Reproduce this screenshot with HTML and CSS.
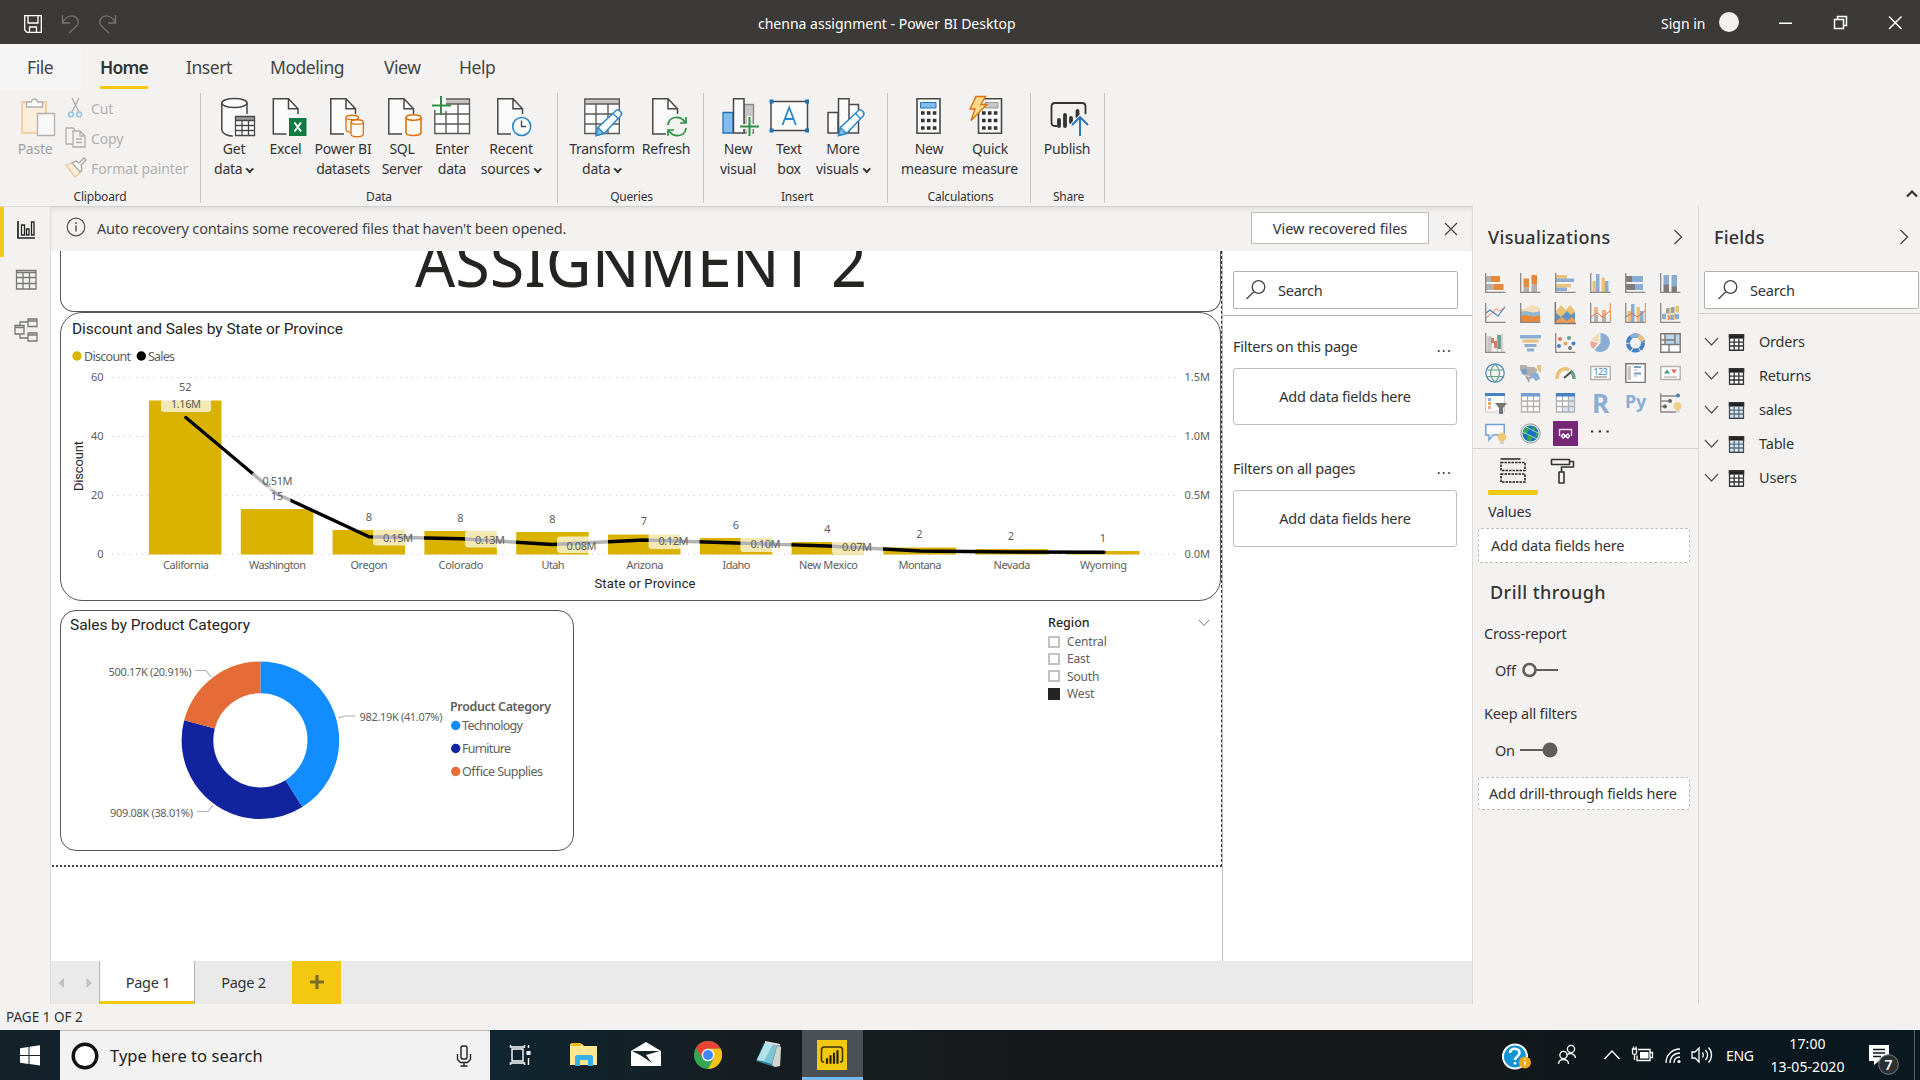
FILE: index.html
```html
<!DOCTYPE html>
<html lang="en">
<head>
<meta charset="utf-8">
<title>chenna assignment - Power BI Desktop</title>
<link rel="stylesheet" href="styles.css">
</head>
<body>
<svg width="0" height="0" class="defs">
  <defs>
    <g id="doc"><path d="M.8 .8H16l9 9.5V36H.8z" fill="#fafafa" stroke="none"/><path d="M14 36H.8V.8H16l9.500 10V16M16 .8v10h9.500" fill="none" stroke="#494847" stroke-width="1.500"/></g>
    <g id="cyl"><path d="M0 3v15c0 4 15 4 15 0V3" fill="#fdfaf5" stroke="#d8730f" stroke-width="1.600"/><ellipse cx="7.500" cy="3" rx="7.500" ry="2.700" fill="#fff" stroke="#d8730f" stroke-width="1.600"/></g>
    <g id="pencil"><path d="M0 26l2-8L20 1c2-2 7 2 5 5L8 24z" fill="#fff" stroke="#2b88c8" stroke-width="1.500"/><path d="M0 26l2-8 6 6zM17 4l5 5" fill="#83bdec" stroke="#2b88c8" stroke-width="1.300"/></g>
    <g id="tbl"><path d="M1 1h18v20H1z" fill="#fff"/><path d="M0 0h20v6H0z" fill="#222"/><path d="M1 1h18v20H1zM1 10.500h18M1 15.500h18M7 6v15M13 6v15" fill="none" stroke="#333" stroke-width="1.700"/></g>
    <g id="axes"><path d="M.7 0v19.300H20.500" fill="none" stroke="#8a8886" stroke-width="1.300"/></g>
  </defs>
</svg>

<header class="titlebar">
  <svg class="qat" width="130" height="44" fill="none" stroke="#fff" stroke-width="1.300">
    <path d="M24.700 15.700h16.600v16.600H27l-2.300-2.300zM28 16v7h10v-7M29.500 32v-5h7v5"/>
    <path d="M62.500 15v8h7.500M63 22c3-6 10-8 13.500-4 2.500 3 2 6 0 8l-7.500 7" stroke="#767472"/>
    <path d="M115.500 15v8H108M115 22c-3-6-10-8-13.500-4-2.500 3-2 6 0 8l7.500 7" stroke="#767472"/>
  </svg>
  <div class="win-title">chenna assignment - Power BI Desktop</div>
  <div class="signin">Sign in</div>
  <i class="avatar"></i>
  <svg width="150" height="44" fill="none" stroke="#fff" stroke-width="1.500"><path d="M9 23.200h13M64.500 19.500h9v9h-9zM67.500 19v-2.500h9v9H74M119 16.500l12.500 12.500M131.500 16.500L119 29"/></svg>
</header>

<nav class="tabs">
  <span class="tab file">File</span><span class="tab on">Home</span><span class="tab insert">Insert</span><span class="tab modeling">Modeling</span><span class="tab view">View</span><span class="tab help">Help</span>
</nav>

<section class="ribbon">
  <div class="group clipboard">
    <div class="btns">
      <div class="btn paste"><svg viewBox="11 95 48 45"><path d="M22 102h24v31H22z" fill="#fbeedd" stroke="#f0cfa4" stroke-width="2"/><path d="M26.500 107v-5h5c0-4 6-4 6 0h5v5z" fill="#fafafa" stroke="#b3b0ad" stroke-width="1.300"/><path d="M37.500 113.500h17v22h-17z" fill="#f8f8f8" stroke="#b3b0ad" stroke-width="1.300"/></svg>Paste</div>
      <div class="clip-list">
        <div class="clip-item"><svg viewBox="0 0 22 22"><path d="M7 1l7 14M14 1L7 15" fill="none" stroke="#b0aeac" stroke-width="1.400"/><circle cx="6" cy="17.500" r="2.400" fill="none" stroke="#9fc6e2" stroke-width="1.700"/><circle cx="14" cy="17.500" r="2.400" fill="none" stroke="#9fc6e2" stroke-width="1.700"/></svg>Cut</div>
        <div class="clip-item"><svg viewBox="0 0 22 22" fill="none" stroke="#b0aeac" stroke-width="1.300"><path d="M7 17H1V1h7l2 2M8 4h7l5 5v11H8zM15 4v5h5M11 12h6M11 15.500h6"/></svg>Copy</div>
        <div class="clip-item"><svg viewBox="0 0 22 22"><path d="M1 8l9-3 7 9-7 6z" fill="#fbeedd" stroke="#efc596" stroke-width="1.300"/><path d="M7 6l4-2 3 2 5-5 2 2-5 5 1 4-2 3z" fill="#f6f5f4" stroke="#aaa8a6" stroke-width="1.300"/></svg>Format painter</div>
      </div>
    </div>
    <div class="glabel">Clipboard</div>
  </div>
  <div class="group data">
    <div class="btns">
      <div class="btn w54"><svg viewBox="211 95 48 45"><path d="M222.800 103v27c1 4 6 6 12 6h13V103" fill="#fafafa"/><path d="M222.800 103v27c1 4 6 6 11 6M248 103v11" fill="none" stroke="#494847" stroke-width="1.500"/><ellipse cx="235.400" cy="103" rx="12.600" ry="4.500" fill="#fafafa" stroke="#494847" stroke-width="1.500"/><path d="M236.500 116.500h19v19h-19z" fill="#fff"/><path d="M236.500 116.500h19v3.500h-19z" fill="#999"/><path d="M236.500 116.500h19v19h-19zM236.500 120.500h19M236.500 125.500h19M236.500 130.500h19M243 120v15.500M249.500 120v15.500" fill="none" stroke="#494847" stroke-width="1.300"/></svg>Get<br>data<i class="caret"></i></div>
      <div class="btn w47"><svg viewBox="261.500 95 48 45"><use href="#doc" x="272" y="98"/><path d="M288.500 118h17.500v18h-17.500z" fill="#107c41"/><path d="M294 122.500l6.500 9M300.500 122.500l-6.500 9" stroke="#fff" stroke-width="2"/></svg>Excel</div>
      <div class="btn w68"><svg viewBox="319 95 48 45"><use href="#doc" x="330" y="98"/><g transform="translate(346 115) scale(.82)"><use href="#cyl"/></g><g transform="translate(351 119.500) scale(.82)"><use href="#cyl"/></g></svg>Power BI<br>datasets</div>
      <div class="btn w50"><svg viewBox="378 95 48 45"><use href="#doc" x="388" y="98"/><use href="#cyl" x="406" y="114.500"/></svg>SQL<br>Server</div>
      <div class="btn w50"><svg viewBox="428 95 48 45"><path d="M434.800 99h34.500v34.500h-34.500z" fill="#fff"/><path d="M446 99h24v5h-24z" fill="#c8c6c4"/><path d="M446 99h23.500v34.500h-34.700V110M446 104h23M435 114h34M435 124h34M446 111v23M458 104v30" fill="none" stroke="#5c5a58" stroke-width="1.400"/><path d="M441 96v19M432 105.500h19" stroke="#2f8f46" stroke-width="2"/></svg>Enter<br>data</div>
      <div class="btn w70"><svg viewBox="488 95 48 45"><use href="#doc" x="498" y="98"/><circle cx="522.700" cy="126.500" r="9" fill="#fff" stroke="#2b88c8" stroke-width="1.600"/><path d="M522.500 120.500v6h4.500" fill="none" stroke="#494847" stroke-width="1.400"/></svg>Recent<br>sources<i class="caret"></i></div>
    </div>
    <div class="glabel">Data</div>
  </div>
  <div class="group queries">
    <div class="btns">
      <div class="btn w72"><svg viewBox="579 95 48 45"><path d="M585.800 99h34.500v34.500h-34.500z" fill="#fff"/><path d="M586 99h34v5h-34z" fill="#c8c6c4"/><path d="M585.800 99h34.500v34.500h-34.500zM586 104h34M586 114h34M586 124h34M597 104v30M609 104v30" fill="none" stroke="#5c5a58" stroke-width="1.400"/><use href="#pencil" x="597" y="109.500"/></svg>Transform<br>data<i class="caret"></i></div>
      <div class="btn w54"><svg viewBox="642 95 48 45"><use href="#doc" x="652" y="98"/><path d="M666 117h22v20h-22z" fill="#f3f2f1"/><path d="M668 125c1-9 12-10 17-3M686 117v6h-6M686 128c-1 9-12 10-17 3M668 136v-6h6" fill="none" stroke="#2f8f46" stroke-width="1.700"/></svg>Refresh</div>
    </div>
    <div class="glabel">Queries</div>
  </div>
  <div class="group insert-g">
    <div class="btns">
      <div class="btn w48"><svg viewBox="714 95 48 45"><path d="M723 112.500h10v20.500h-10z" fill="#83bdec" stroke="#2272b9" stroke-width="1.300"/><path d="M744 104.500h9.500v28.500H744z" fill="#c8c6c4" stroke="#8a8886" stroke-width="1.300"/><path d="M733.500 98.800h10.500v34.200h-10.500z" fill="#fafafa" stroke="#494847" stroke-width="1.500"/><path d="M749.500 116v21M740 126.500h19" stroke="#f3f2f1" stroke-width="5"/><path d="M749.500 117v19M740 126.500h19" stroke="#2f8f46" stroke-width="2"/></svg>New<br>visual</div>
      <div class="btn w54"><svg viewBox="765 95 48 45"><path d="M771 101.500h36.500v29H771z" fill="#fafafa" stroke="#494847" stroke-width="1.500"/><path d="M769.500 99.500h4v4h-4zM805 99.500h4v4h-4zM769.500 128.500h4v4h-4zM805 128.500h4v4h-4z" fill="#2272b9"/><path d="M782.500 125l6.700-17.500 6.700 17.500M785 119h8.500" fill="none" stroke="#2b88c8" stroke-width="1.800"/></svg>Text<br>box</div>
      <div class="btn w56"><svg viewBox="820 95 48 45"><path d="M829 112.500h10v20.500h-10zM850 104.500h9.500v28.500H850zM839.500 98.800h10.500v34.200h-10.500z" fill="#fafafa" stroke="#494847" stroke-width="1.500"/><use href="#pencil" x="839.500" y="109.500"/></svg>More<br>visuals<i class="caret"></i></div>
    </div>
    <div class="glabel">Insert</div>
  </div>
  <div class="group calc">
    <div class="btns">
      <div class="btn w62"><svg viewBox="905 95 48 45"><path d="M917 98.800h23v34.500h-23z" fill="#fafafa" stroke="#494847" stroke-width="1.600"/><path d="M920.500 102.500h15.500v5.500h-15.500z" fill="#83bdec" stroke="#2272b9"/><path d="M921 113h15.500M921 120.500h15.500M921 128h15.500" stroke="#333" stroke-width="3.600" stroke-dasharray="3.600 2.300"/></svg>New<br>measure</div>
      <div class="btn w60"><svg viewBox="966 95 48 45"><path d="M978.500 98.800h23v34.500h-23z" fill="#fafafa" stroke="#494847" stroke-width="1.600"/><path d="M985 102.500h13v5.500h-13z" fill="#c8c6c4" stroke="#999"/><path d="M982 113h15.500M982 120.500h15.500M982 128h15.500" stroke="#333" stroke-width="3.600" stroke-dasharray="3.600 2.300"/><path d="M976 96.500h9.500l-4.500 8h6L971 120.500l4-11.500h-5z" fill="#ffd98a" stroke="#d8730f" stroke-width="1.400"/></svg>Quick<br>measure</div>
    </div>
    <div class="glabel">Calculations</div>
  </div>
  <div class="group share">
    <div class="btns">
      <div class="btn w54"><svg viewBox="1043 95 48 45"><path d="M1057 126h-2c-2.500 0-3.500-1-3.500-3.500v-16c0-2.500 1-3.500 3.500-3.500h27c2.500 0 3.500 1 3.500 3.500V114" fill="none" stroke="#333" stroke-width="1.800"/><path d="M1059 120v6M1065 115v11M1071 118v4M1077.500 111v6" stroke="#333" stroke-width="3.800" stroke-linecap="round"/><path d="M1080 136v-19M1072 125l8-8 8 8" fill="none" stroke="#f3f2f1" stroke-width="4"/><path d="M1080 136v-19M1072 125l8-8 8 8" fill="none" stroke="#2272b9" stroke-width="1.900"/></svg>Publish</div>
    </div>
    <div class="glabel">Share</div>
  </div>
  <svg class="collapse" width="14" height="9"><path d="M1 7.500l5-5 5 5" fill="none" stroke="#333" stroke-width="2.200"/></svg>
</section>

<main class="main">
  <aside class="rail">
    <div class="rail-item on"><svg viewBox="0 0 24 24" fill="none" stroke="#222" stroke-width="1.700"><path d="M4 3v17h17"/><path d="M7.500 7h3v10h-3zM12.500 11h2.500v6h-2.500zM17.500 4h2.500v13h-2.500z" stroke-width="1.300"/></svg></div>
    <div class="rail-item"><svg viewBox="0 0 24 24" fill="none" stroke="#777" stroke-width="1.300"><path d="M2.500 2.500h19.500v18.500h-19.500zM2.500 4.500h19.500M2.500 9.500h19.500M2.500 15.500h19.500M9 4v17M15.500 4v17"/></svg></div>
    <div class="rail-item"><svg viewBox="0 0 24 24" fill="none" stroke="#777" stroke-width="1.300"><path d="M1 7.500h9v8.500H1zM1 9.500h9M14 1h9v7.500h-9zM14 3h9M14 15h9v8h-9zM14 17h9M6 7V4h8M6 16v4h8"/></svg></div>
  </aside>

  <section class="report">
    <div class="recovery">
      <svg width="20" height="20" fill="none" stroke="#555" stroke-width="1.200"><circle cx="10" cy="10" r="8.800"/><path d="M10 8.500v6M10 5.300v1.600" stroke-width="1.500"/></svg>
      <span class="rec-text">Auto recovery contains some recovered files that haven't been opened.</span>
      <span class="rec-btn">View recovered files</span>
      <svg class="rec-x" width="14" height="14"><path d="M1 1l12 12M13 1L1 13" stroke="#444" stroke-width="1.200"/></svg>
    </div>
    <div class="work">
      <div class="canvas">
        <div class="card heading"><svg viewBox="61 251 1160 60"><text x="415" y="286.500" font-size="65" textLength="452" lengthAdjust="spacingAndGlyphs" fill="#252423">ASSIGNMENT 2</text></svg></div>
        <div class="card combo">
          <svg viewBox="61 313 1160 287" class="viz">
            <text class="vt" x="72" y="334" textLength="271">Discount and Sales by State or Province</text>
            <circle cx="77" cy="356" r="4.700" fill="#d9b300"/><text class="lg" x="84" y="361" textLength="47">Discount</text>
            <circle cx="141.300" cy="356" r="4.700"/><text class="lg" x="148" y="361" textLength="27">Sales</text>
            <path d="M112 377.500H1178M112 436.500H1178M112 495.500H1178M112 554.500H1178" stroke="#c9c8c6" stroke-dasharray="1 5"/>
            <g class="ax end"><text x="103.500" y="381">60</text><text x="103.500" y="440">40</text><text x="103.500" y="499">20</text><text x="103.500" y="558">0</text><text x="1210" y="381">1.5M</text><text x="1210" y="440">1.0M</text><text x="1210" y="499">0.5M</text><text x="1210" y="558">0.0M</text></g>
            <path fill="#d9b300" d="M149 400.500h72.500v154H149zM240.800 509h72.500v45.500h-72.500zM332.600 530h72.500v24.500h-72.500zM424.400 531h72.500v23.500h-72.500zM516.200 532h72.500v22.500h-72.500zM608 534.500h72.500v20H608zM699.800 538h72.500v16.500h-72.500zM791.600 542h72.500v12.500h-72.500zM883.400 547.500h72.500v7h-72.500zM975.200 549h72.500v5.500h-72.500zM1067 551h72.500v3.500H1067z"/>
            <path d="M185.800 417.500L277 494 369 536.700 461 538.700 552.500 544.500 644 540 736 543 828 546 920 551 1012 552 1104 552.300" fill="none" stroke="#000" stroke-width="3.400" stroke-linecap="round" stroke-linejoin="round"/>
            <g fill="#fff" fill-opacity=".7"><rect x="161" y="396" width="50" height="16" rx="3"/><rect x="252" y="472.500" width="51" height="17" rx="3"/><rect x="263" y="487" width="27.500" height="17" rx="3"/><rect x="373" y="529" width="51" height="16.500" rx="3"/><rect x="465" y="531" width="51" height="16.500" rx="3"/><rect x="557" y="536.500" width="51" height="16.500" rx="3"/><rect x="648.600" y="532.500" width="51" height="16.500" rx="3"/><rect x="740.400" y="535.500" width="51" height="16.500" rx="3"/><rect x="832" y="538" width="51" height="16.500" rx="3"/></g>
            <g class="ax mid"><text x="185.300" y="391">52</text><text x="277" y="500">15</text><text x="369" y="521">8</text><text x="460.500" y="522">8</text><text x="552.500" y="523">8</text><text x="644" y="525">7</text><text x="736" y="529">6</text><text x="827.500" y="533">4</text><text x="919.500" y="538">2</text><text x="1011" y="540">2</text><text x="1103" y="542">1</text>
            <text x="186" y="408" textLength="30">1.16M</text><text x="277.500" y="485" textLength="30">0.51M</text><text x="398" y="542" textLength="30">0.15M</text><text x="490" y="544" textLength="30">0.13M</text><text x="581.500" y="550" textLength="30">0.08M</text><text x="673.500" y="545" textLength="30">0.12M</text><text x="765.500" y="548" textLength="30">0.10M</text><text x="857" y="551" textLength="30">0.07M</text>
            <text x="186" y="569" textLength="46">California</text><text x="277.500" y="569" textLength="57">Washington</text><text x="369" y="569" textLength="37">Oregon</text><text x="461" y="569" textLength="45">Colorado</text><text x="553" y="569" textLength="23">Utah</text><text x="645" y="569" textLength="37">Arizona</text><text x="736.500" y="569" textLength="28">Idaho</text><text x="828.500" y="569" textLength="59">New Mexico</text><text x="920" y="569" textLength="43">Montana</text><text x="1012" y="569" textLength="37">Nevada</text><text x="1103.500" y="569" textLength="47">Wyoming</text></g>
            <text class="at" x="594.500" y="588" textLength="101">State or Province</text>
            <text class="at" transform="translate(83 491) rotate(-90)" textLength="50">Discount</text>
          </svg>
        </div>
        <div class="lower">
          <div class="card donut">
            <svg viewBox="61 611 512 239" class="viz">
              <text class="vt" x="70" y="630" textLength="180">Sales by Product Category</text>
              <g fill="none" stroke-width="31.700" transform="rotate(-90 260.400 740.300)">
                <circle cx="260.400" cy="740.300" r="62.950" pathLength="100" stroke="#118dff" stroke-dasharray="41.070 100"/>
                <circle cx="260.400" cy="740.300" r="62.950" pathLength="100" stroke="#12239e" stroke-dasharray="38.020 100" stroke-dashoffset="-41.070"/>
                <circle cx="260.400" cy="740.300" r="62.950" pathLength="100" stroke="#e66c37" stroke-dasharray="20.910 100" stroke-dashoffset="-79.090"/>
              </g>
              <path d="M195 670.500h11l5 6.500M338 718l7-2h10.500M197 811.500h11l5-6.500" fill="none" stroke="#b3b0ad" stroke-width="1.200"/>
              <g class="ax"><text x="108.500" y="676" textLength="83">500.17K (20.91%)</text><text x="359.500" y="721" textLength="83">982.19K (41.07%)</text><text x="110" y="817" textLength="83">909.08K (38.01%)</text></g>
              <text class="lg b" x="450" y="711" textLength="101">Product Category</text>
              <circle cx="455.700" cy="725.500" r="4.700" fill="#118dff"/><circle cx="455.700" cy="748.500" r="4.700" fill="#12239e"/><circle cx="455.700" cy="771.500" r="4.700" fill="#e66c37"/>
              <text class="lg" x="462" y="730" textLength="61">Technology</text><text class="lg" x="462" y="753" textLength="49">Furniture</text><text class="lg" x="462" y="776" textLength="81">Office Supplies</text>
            </svg>
          </div>
          <div class="slicer">
            <div class="sl-head">Region<svg width="12" height="8"><path d="M1 1l5 5.500L11 1" fill="none" stroke="#777"/></svg></div>
            <div class="sl-row"><i></i>Central</div><div class="sl-row"><i></i>East</div><div class="sl-row"><i></i>South</div><div class="sl-row"><i class="sel"></i>West</div>
          </div>
        </div>
      </div>
      <aside class="filters">
        <div class="searchwrap"><div class="search"><svg width="22" height="22"><circle cx="13.500" cy="8" r="6.300" fill="none" stroke="#444" stroke-width="1.300"/><path d="M9 12.500L1.500 20" stroke="#444" stroke-width="1.300"/></svg>Search</div></div>
        <div class="f-head">Filters on this page<b>...</b></div>
        <div class="f-box">Add data fields here</div>
        <div class="f-head second">Filters on all pages<b>...</b></div>
        <div class="f-box">Add data fields here</div>
      </aside>
    </div>
    <div class="pages">
      <svg width="49" height="43" fill="#c2c0be"><path d="M13 17v10l-5.500-5zM35.500 17v10l5.500-5z"/></svg>
      <span class="pg on">Page 1</span><span class="pg">Page 2</span>
      <span class="add"><svg width="14" height="14"><path d="M7 0v14M0 7h14" stroke="#7d6d26" stroke-width="3.200"/></svg></span>
    </div>
  </section>

  <aside class="vis">
    <div class="p-head">Visualizations<svg width="11" height="16"><path d="M1.500 1l7 7-7 7" fill="none" stroke="#444" stroke-width="1.300"/></svg></div>
    <div class="icons">
      <svg viewBox="0 0 21 21"><path d="M1 3h5v6H1zM1 11h8v6H1z" fill="#b3b0ad"/><path d="M6 3h9v6H6zM9 11h9.500v6H9z" fill="#e8883a"/><use href="#axes"/></svg>
      <svg viewBox="0 0 21 21"><path d="M3.500 14H9v5H3.500zM11.500 11H17v8h-5.500z" fill="#b3b0ad"/><path d="M3.500 5.500H9V14H3.500zM11.500 2H17v9h-5.500z" fill="#e8883a"/><use href="#axes"/></svg>
      <svg viewBox="0 0 21 21"><path d="M1 2h11v3.500H1zM1 11h15v3.500H1z" fill="#e9c178"/><path d="M1 5.500h18V9H1zM1 14.500h11V18H1z" fill="#8badd3"/><use href="#axes"/></svg>
      <svg viewBox="0 0 21 21"><path d="M2.500 8H6v11H2.500zM11.500 4.500H15V19h-3.500z" fill="#e9c178"/><path d="M6 1h3.500v18H6zM15 8h3.500v11H15z" fill="#8badd3"/><use href="#axes"/></svg>
      <svg viewBox="0 0 21 21"><path d="M1 3h6v6H1zM1 11h9v6H1z" fill="#7f7d7b"/><path d="M7 3h11v6H7zM10 11h8v6h-8z" fill="#8badd3"/><use href="#axes"/></svg>
      <svg viewBox="0 0 21 21"><path d="M3.500 2H9v10H3.500zM11.500 2H17v12h-5.500z" fill="#8badd3"/><path d="M3.500 11.500H9V19H3.500zM11.500 13.500H17V19h-5.500z" fill="#7f7d7b"/><use href="#axes"/></svg>

      <svg viewBox="0 0 21 21" fill="none" stroke-width="1.200"><path d="M1 15l5-4 5-5 4 2 5-4" stroke="#eda79a"/><path d="M1 10l4-3 4 3 4 3 3-4 4-5" stroke="#4781c0"/><use href="#axes"/></svg>
      <svg viewBox="0 0 21 21"><path d="M1 6c5 1 7-4 12-4l7 3v6H1z" fill="#f3dcba"/><path d="M1 9c6-3 8 3 19-1v6H1z" fill="#8fb7cf"/><path d="M1 13c6-3 9 3 19-1v7H1z" fill="#e8883a"/><use href="#axes"/></svg>
      <svg viewBox="0 0 21 21"><path d="M1 8l5-6 5 5 4-5 5 6v8H1z" fill="#e9c178"/><path d="M1 10l5 4 6-6 4 4 4-3v10H1z" fill="#5f93bd"/><path d="M1 18l6-4 5 4 5-4 3 3v3H1z" fill="#ee9b56"/><path d="M.3-1v21.500H21" fill="none" stroke="#777" stroke-width="1.500"/></svg>
      <svg viewBox="0 0 21 21"><path d="M4 4h4v7H4zM12 7h4v6h-4z" fill="#f0b486"/><path d="M4 12h4v7H4zM12 13h4v6h-4z" fill="#b3b0ad"/><path d="M1 14l6-4 5 4 8-6" fill="none" stroke="#e06c4c"/><path d="M20.300 0v19" stroke="#e8883a"/><use href="#axes"/></svg>
      <svg viewBox="0 0 21 21"><path d="M2.500 8H6v11H2.500zM11.500 4H15v15h-3.500z" fill="#e9c178"/><path d="M6 1h3.500v18H6zM15 8h3.500v11H15z" fill="#8badd3"/><path d="M1 14l6-4 5 4 8-6" fill="none" stroke="#e06c4c"/><path d="M20.300 0v19" stroke="#e8883a"/><use href="#axes"/></svg>
      <svg viewBox="0 0 21 21"><path d="M3 10h3v7H3zM8 10l4-1 6 8h-4l-3-5-3 3z" fill="#f2d9ae"/><path d="M2 11h4v5H2zM10 12h4v5h-4zM15 11h4v5h-4z" fill="#8badd3"/><path d="M8 12l3 3-3 2zM15 10l-2 7" fill="#e8883a" stroke="#e8a468"/><path d="M6 5h3.500v5.500H6zM11 4h3.500v6H11z" fill="#a3a19f"/><path d="M15.500 3H19v6.500h-3.500zM9.500 5H11v5H9.500z" fill="#e9c178"/><use href="#axes"/></svg>

      <svg viewBox="0 0 21 21"><path d="M3 4h3v15H3zM12.500 1v18M17 1v18" fill="#c8c6c4" stroke="#c8c6c4" stroke-width="1.500"/><path d="M6 5h3v5H6zM9 8h3v7H9z" fill="#e0765f"/><path d="M12.500 2h3.500v14h-3.500z" fill="#69a28c"/><use href="#axes"/></svg>
      <svg viewBox="0 0 21 21"><path d="M0 2h21v3.500H0zM4.500 11h12v3H4.500zM7 15.500h7v3H7z" fill="#8badd3"/><path d="M2.500 6.500h16v3h-16z" fill="#e9c178"/></svg>
      <svg viewBox="0 0 21 21"><use href="#axes"/><circle cx="5" cy="6" r="2" fill="#e0765f"/><circle cx="14" cy="5" r="2" fill="#69a28c"/><circle cx="18.500" cy="10.500" r="2" fill="#4781c0"/><circle cx="10.500" cy="10.500" r="2" fill="#e0a94e"/><circle cx="4" cy="13" r="2" fill="#4781c0"/><circle cx="15" cy="15" r="2" fill="#777"/></svg>
      <svg viewBox="0 0 21 21"><path d="M10.500 10V0a9.500 9.500 0 1 1-6 17z" fill="#8badd3"/><path d="M9 9V0L1 7z" fill="#f2d9ae"/><path d="M8 10L.5 8c-1 3 0 6 3 8z" fill="#eba898"/></svg>
      <svg viewBox="0 0 21 21"><circle cx="10.500" cy="10" r="7.500" fill="none" stroke="#4781c0" stroke-width="4" stroke-dasharray="7 .900"/><path d="M13 3c3 1 4 3 5 5" fill="none" stroke="#e9c178" stroke-width="4"/><path d="M6 4c2-2 5-2 7-1" fill="none" stroke="#8badd3" stroke-width="4"/></svg>
      <svg viewBox="0 0 21 21"><path d="M.8 .8h19.400v18.400H.8z" fill="#fff"/><path d="M5 1h15v10H5z" fill="#bcd3ea"/><path d="M.8 .8h19.400v18.400H.8zM5 1v10M1 7h4M5 7h10V1M1 11.500h19M9 12v7M15 7v5" fill="none" stroke="#7a7876" stroke-width="1.400"/></svg>

      <svg viewBox="0 0 21 21" fill="none" stroke-width="1.200"><circle cx="10" cy="10" r="9.200" stroke="#4781c0"/><path d="M1 7h18M1 13.500h18M10 1c-6 6-6 12 0 18M10 1c6 6 6 12 0 18" stroke="#69a28c"/></svg>
      <svg viewBox="0 0 21 21"><path d="M0 2h6l2 2h6l3 2-1 6-6 1-7-1-3-5z" fill="#b3b0ad"/><path d="M1 6h6v5H2z" fill="#729ed1"/><path d="M10 11l8-1 2 6-4 2-3-3-3 1z" fill="#8badd3"/><path d="M17 2h4v8l-3-2z" fill="#e9c178"/><path d="M5 13l5 1-1 6z" fill="#a3a19f"/></svg>
      <svg viewBox="0 0 21 21" fill="none"><path d="M2 16c0-9 7-12 12-9" stroke="#e9c178" stroke-width="3.500"/><path d="M15.500 8c3 2 3.500 5 3.500 8" stroke="#69a28c" stroke-width="3.500"/><path d="M9 15l7-6" stroke="#444" stroke-width="1.800"/></svg>
      <svg viewBox="0 0 21 21"><path d="M.8 3.500h19.400v13H.8z" fill="#fff" stroke="#b3b0ad" stroke-width="1.400"/><text x="10.500" y="11.500" font-size="8.500" text-anchor="middle" fill="#4781c0">123</text><path d="M4 14h13" stroke="#aaa" stroke-width="1.500"/></svg>
      <svg viewBox="0 0 21 21"><path d="M.8 .8h19.400v18.600H.8z" fill="#fff" stroke="#7a7876" stroke-width="1.400"/><path d="M2.500 3h3.500v14H2.500z" fill="#c8c6c4"/><path d="M9 4h7M9 10.500h7" stroke="#729ed1" stroke-width="2"/><path d="M9 7h3M9 13h3" stroke="#aaa"/></svg>
      <svg viewBox="0 0 21 21"><path d="M.8 3.500h19.400v13H.8z" fill="#fff" stroke="#b3b0ad" stroke-width="1.400"/><path d="M4 10.500l3-4 3 4z" fill="#4d9b7b"/><path d="M11 6.500h6l-3 4z" fill="#e0665b"/><path d="M4 14h13" stroke="#b3b0ad" stroke-width="1.200"/></svg>

      <svg viewBox="0 0 21 21"><path d="M.7 1h18.600v18H.7z" fill="#fff" stroke="#c8c6c4"/><path d="M0 0h20v3H0z" fill="#4781c0"/><path d="M3 5h3v3H3z" fill="#8badd3"/><path d="M3 9h3v3H3z" fill="#e9a64e"/><path d="M3 13h3v3H3z" fill="#eba898"/><path d="M10 10h12l-4 5v6h-4v-6z" fill="#777"/></svg>
      <svg viewBox="0 0 21 21"><path d="M1.500 1h18v18h-18z" fill="#fff"/><path d="M1.500 1h18v18h-18zM1.500 8h18M1.500 13.500h18M7.500 3v16M13.500 3v16" fill="none" stroke="#b3b0ad" stroke-width="1.300"/><path d="M1 0h19v3.500H1z" fill="#729ed1"/></svg>
      <svg viewBox="0 0 21 21"><path d="M1.500 1h18v18h-18z" fill="#fff"/><path d="M13.500 3h6v16h-6zM7.500 13h6v6h-6z" fill="#d5e4f3"/><path d="M1.500 1h18v18h-18zM1.500 8h18M1.500 13.500h18M7.500 3v16M13.500 3v16" fill="none" stroke="#b3b0ad" stroke-width="1.300"/><path d="M1 0h19v3.500H1z" fill="#4781c0"/></svg>
      <svg viewBox="0 0 21 21"><text x="2" y="19.500" font-size="27" font-weight="700" textLength="17" lengthAdjust="spacingAndGlyphs" fill="#8badd3">R</text></svg>
      <svg viewBox="0 0 21 21"><text x="0" y="15" font-size="18" font-weight="700" textLength="21" lengthAdjust="spacingAndGlyphs" fill="#8badd3">Py</text></svg>
      <svg viewBox="0 0 21 21"><path d="M.7 0v19H16M1 3h17M1 8h9M1 13.500h4" fill="none" stroke="#8a8886" stroke-width="1.300"/><circle cx="18" cy="2.500" r="2" fill="#4781c0"/><circle cx="10" cy="8" r="2" fill="#666"/><circle cx="5" cy="13.500" r="2" fill="#666"/><circle cx="17.500" cy="13" r="4" fill="#f0cf85"/><path d="M15.500 17h4v2.500h-4z" fill="#d8d0be"/></svg>

      <svg viewBox="0 0 21 21"><path d="M.8 1.500h18.400v10.500H8l-4 5v-5H.8z" fill="#fafafa" stroke="#729ed1" stroke-width="1.400"/><circle cx="17" cy="14" r="4.300" fill="#efc96f"/><path d="M15 18h4v3h-4z" fill="#d8d0be"/></svg>
      <svg viewBox="0 0 21 21"><circle cx="10.500" cy="10.500" r="9.700" fill="#e8e8e8" stroke="#999"/><circle cx="10.500" cy="10.500" r="8" fill="#1971c2"/><path d="M4 6l5-3-1 6-5 3zM12 3l4 2-3 4zM8 12l5 2-2 4-4-1zM16 9l2 3-3 3z" fill="#37a845"/><path d="M3 9l14 7M6 4l12 6" stroke="#cfe3e8" stroke-width=".8"/></svg>
      <svg viewBox="0 0 21 21" class="papp"><path d="M-2-2h25v25H-2z" fill="#742774"/><path d="M4.500 13V6.500h12V13" fill="none" stroke="#e9d8e9" stroke-width="1.400"/><path d="M5.500 13l2.500-3 2.500 2 2.500-2 2.500 3-2.500 3-2.500-2L8 16z" fill="#fff"/><path d="M7.500 13H9M12 13h1.500" stroke="#742774" stroke-width="1.300"/></svg>
      <svg viewBox="0 0 21 21"><path d="M1 8.500h2.200M8.700 8.500H11M16.500 8.500h2.200" stroke="#333" stroke-width="2"/></svg>
    </div>
    <div class="modes">
      <div class="mode on"><svg width="26" height="26" fill="none" stroke="#222" stroke-width="1.500"><path d="M.5 1h20"/><path d="M1 4.500h24v8H1zM1 16h24v8H1z" stroke-dasharray="2.500 1"/></svg></div>
      <svg class="roller" width="26" height="27" fill="none" stroke="#333" stroke-width="1.600"><path d="M1.500 1.500h18v5h-18zM20 3.500h3.500v5.500H11.500v4.500M9 14h5v11H9z" stroke-linejoin="round"/></svg>
    </div>
    <div class="v-label">Values</div>
    <div class="v-box">Add data fields here</div>
    <div class="d-head">Drill through</div>
    <div class="d-label">Cross-report</div>
    <div class="toggle">Off<svg width="38" height="16"><path d="M15 8h22" stroke="#605e5c" stroke-width="2"/><circle cx="8.500" cy="8" r="6" fill="none" stroke="#605e5c" stroke-width="2.600"/></svg></div>
    <div class="d-label">Keep all filters</div>
    <div class="toggle">On<svg width="38" height="16"><path d="M0 8h25" stroke="#605e5c" stroke-width="2"/><circle cx="30" cy="8" r="7.500" fill="#605e5c"/></svg></div>
    <div class="v-box drill">Add drill-through fields here</div>
  </aside>

  <aside class="fields">
    <div class="p-head">Fields<svg width="11" height="16"><path d="M1.500 1l7 7-7 7" fill="none" stroke="#444" stroke-width="1.300"/></svg></div>
    <div class="searchwrap"><div class="search"><svg width="22" height="22"><circle cx="13.500" cy="8" r="6.300" fill="none" stroke="#444" stroke-width="1.300"/><path d="M9 12.500L1.500 20" stroke="#444" stroke-width="1.300"/></svg>Search</div></div>
    <div class="rows">
      <div class="row"><svg width="15" height="9"><path d="M1 1l6.500 7L14 1" fill="none" stroke="#555" stroke-width="1.200"/></svg><svg class="ti" viewBox="0 0 20 22"><use href="#tbl"/></svg>Orders</div>
      <div class="row"><svg width="15" height="9"><path d="M1 1l6.500 7L14 1" fill="none" stroke="#555" stroke-width="1.200"/></svg><svg class="ti" viewBox="0 0 20 22"><use href="#tbl"/></svg>Returns</div>
      <div class="row"><svg width="15" height="9"><path d="M1 1l6.500 7L14 1" fill="none" stroke="#555" stroke-width="1.200"/></svg><svg class="ti" viewBox="0 0 20 22"><use href="#tbl"/><path d="M1 6h18v15H1z" fill="#9cc3e6" opacity=".4"/></svg>sales</div>
      <div class="row"><svg width="15" height="9"><path d="M1 1l6.500 7L14 1" fill="none" stroke="#555" stroke-width="1.200"/></svg><svg class="ti" viewBox="0 0 20 22"><use href="#tbl"/><path d="M1 6h18v15H1z" fill="#9cc3e6" opacity=".4"/></svg>Table</div>
      <div class="row"><svg width="15" height="9"><path d="M1 1l6.500 7L14 1" fill="none" stroke="#555" stroke-width="1.200"/></svg><svg class="ti" viewBox="0 0 20 22"><use href="#tbl"/></svg>Users</div>
    </div>
  </aside>
</main>

<div class="status">PAGE 1 OF 2</div>

<footer class="taskbar">
  <svg width="60" height="50"><path d="M20 18.200l8.500-1.200v8H20zM29.500 16.800L40 15.300V25H29.500zM20 26h8.500v8L20 32.800zM29.500 26H40v9.500L29.500 34z" fill="#fff"/></svg>
  <div class="tb-search">
    <svg width="50" height="50"><circle cx="25" cy="25" r="11.800" fill="#fff" stroke="#111" stroke-width="3.400"/></svg>
    <span>Type here to search</span>
    <svg width="16" height="22" fill="none" stroke="#222" stroke-width="1.400"><rect x="5" y="1" width="6" height="13" rx="1.500"/><path d="M1.500 9v5.500l3 3h7l3-3V9M8 18v3M4.500 21h7"/></svg>
  </div>
  <svg class="apps" viewBox="490 1030 312 50" width="312" height="50">
    <path d="M512 1049h11v12h-11zM510.500 1045v2h14v-2M510.500 1065v-2h14v2M528.500 1045v3M528.500 1058v7" fill="none" stroke="#fff" stroke-width="1.400"/><path d="M526.500 1051h4v4h-4z" fill="#fff"/>
    <path d="M570 1044h12l2 2h13v19h-27z" fill="#ffe694"/><path d="M571 1043h10v3h-10z" fill="#f7b614"/><path d="M575 1066v-9c0-1 1-2 2-2h14c1 0 2 1 2 2v9h-5v-6h-8v6z" fill="#38b1e8"/>
    <path d="M631 1051l15-9 15 9v15h-30z" fill="#fff"/><path d="M632 1051h28l-14 4 6 8-12-8z" fill="#14222a"/>
    <circle cx="708" cy="1055" r="14" fill="#34a853"/><path d="M708 1048.500h12.500A14 14 0 0 1 708 1069l6-11z" fill="#fbc116"/><path d="M696 1048a14 14 0 0 1 24.500.5H708l-6 9z" fill="#ea4335"/><circle cx="708" cy="1055" r="6.300" fill="#fff"/><circle cx="708" cy="1055" r="5" fill="#4285f4"/>
    <path d="M764 1043l17 3-1 20-5 1-19-6z" fill="#2c7f93"/><path d="M765 1043l12 2-5 19-15-4z" fill="#7cc3d2"/><path d="M765 1043l8 1-9 17-7-1z" fill="#b4e2ea"/><path d="M777 1046l4 1-1 19-5 1-3-2z" fill="#d5d3cd"/><path d="M765 1042l15 3" stroke="#ddd" stroke-width="2"/>
  </svg>
  <div class="pbi"><svg width="30" height="30"><path d="M0 0h30v30H0z" fill="#f2c811"/><path d="M7 22H6c-1 0-1.500-1-1.500-2v-10c0-2 1-3 3-3h15c2 0 3 1 3 3v10c0 1-.5 2-1.500 2h-1" fill="none" stroke="#3a3000" stroke-width="1.500"/><path d="M10 19v4M13.500 16v7M17 13.500v9.500M20.500 11v12" stroke="#2b2400" stroke-width="2.200" stroke-linecap="round"/></svg></div>
  <svg class="tray" viewBox="1495 1030 225 50" width="225" height="50" fill="none" stroke="#fff" stroke-width="1.300">
    <circle cx="1515" cy="1056.500" r="12" fill="#0f93d4" stroke-width="2"/><path d="M1510 1053c0-6 9.500-5.500 9.500 0 0 3.500-4.500 3.500-4.500 7M1515 1062v2.500" stroke-width="2.600"/><circle cx="1525" cy="1062.500" r="6" fill="#f0a71a" stroke="none"/><path d="M1525 1061.500v4M1525 1058.500v1.500" stroke-width="1.600"/>
    <circle cx="1571" cy="1049" r="3.600"/><circle cx="1563.500" cy="1055" r="3.600"/><path d="M1567 1055c3-3 8-1 8.500 3M1558.500 1064c0-6 10-6 10 0"/>
    <path d="M1604.500 1059l7.500-8 7.500 8"/>
    <path d="M1638 1049.500h12v11h-13v-5M1650.500 1052.500h2v5h-2M1632.500 1049v4c0 2 4 2 4 0v-4zM1634.500 1055v5M1633.500 1046.500v2M1636 1046.500v2"/><path d="M1640 1052h8.500v6.500h-8.500z" fill="#fff" stroke="none"/>
    <path d="M1666 1063c0-8 6-14 14-14M1670 1063c0-6 4-10 10-10M1674 1063c0-4 2-6 6-6"/><circle cx="1679" cy="1061.500" r="1.600" fill="#fff" stroke="none"/>
    <path d="M1692 1052h3l4-4v14l-4-4h-3zM1702.500 1052.500c1 1 1 4 0 5M1705.500 1050c2.500 3 2.500 7 0 10M1708.500 1047.500c4 4 4 11 0 15"/>
  </svg>
  <span class="eng">ENG</span>
  <span class="clock">17:00<br>13-05-2020</span>
  <svg class="note" viewBox="1865 1030 55 50" width="55" height="50"><path d="M1869 1045h20v16h-10l-5 4v-4h-5z" fill="#fff"/><path d="M1873 1049.500h12M1873 1053h12M1873 1056.500h8" stroke="#0c1a20" stroke-width="1.300"/><circle cx="1888.500" cy="1064.500" r="9.800" fill="#2b3034" stroke="#7b7f82"/><text x="1888.500" y="1070" font-size="14" font-weight="600" text-anchor="middle" fill="#fff">7</text><path d="M1914.500 1030v50" stroke="#5b6468"/></svg>
</footer>
</body>
</html>
```
FILE: styles.css
```css
* { box-sizing: border-box; }
body {
  margin: 0;
  width: 1920px;
  height: 1080px;
  overflow: hidden;
  display: grid;
  grid-template-rows: 44px 47px 115px 798px 26px 50px;
  background: #f3f2f1;
  color: #333;
  font-family: "Noto Sans", "Open Sans", sans-serif;
  font-size: 14px;
}
svg { display: block; flex: none; }
.defs { position: absolute; }

.titlebar { display: flex; align-items: center; background: #3b3a38; color: #fff; }
.win-title { flex: 1; padding-left: 628px; line-height: 44px; padding-top: 3px; letter-spacing: 0; }
.signin { padding-top: 3px; width: 58px; }
.avatar { width: 20px; height: 20px; border-radius: 50%; background: #f3f2f1; margin-right: 31px; }

.tabs { display: flex; font-size: 17.500px; line-height: 47px; color: #444; letter-spacing: -.45px; }
.tab { height: 45px; }
.file { width: 81px; padding-left: 27px; background: #f5f5f5; }
.tab.on { margin-left: 19px; width: 48px; font-weight: 600; border-bottom: 3px solid #f2c811; letter-spacing: -.8px; color: #333; }
.insert { margin-left: 38px; width: 84px; }
.modeling { width: 114px; }
.view { width: 75px; }

.ribbon { display: flex; padding-top: 2px; }
.group { display: flex; flex-direction: column; height: 110px; border-right: 1px solid #c8c6c4; }
.clipboard { width: 201px; }
.data { width: 357px; padding-left: 7px; }
.queries { width: 146px; padding-left: 9px; }
.insert-g { width: 184px; padding-left: 10px; }
.calc { width: 143px; padding-left: 10px; }
.share { width: 74px; padding-left: 9px; }
.btns { display: flex; flex: 1; }
.btn { text-align: center; line-height: 20px; white-space: nowrap; letter-spacing: -.25px; padding-top: 2px; }
.btn svg { width: 48px; height: 45px; margin: 0 auto -1px; }
.w47 { width: 47px; } .w48 { width: 48px; } .w50 { width: 50px; } .w54 { width: 54px; } .w56 { width: 56px; }
.w60 { width: 60px; } .w62 { width: 62px; } .w68 { width: 68px; } .w70 { width: 70px; } .w72 { width: 72px; }
.btn.w47 svg, .btn.w48 svg, .btn.w50 svg { margin-left: calc(50% - 24px); }
.btn.w70, .btn.w54:first-child, .btn.w72, .btn.w56 { margin-left: -1px; margin-right: 1px; }
.share .btn.w54:first-child { margin-left: 0; margin-right: 0; }
.caret { display: inline-block; width: 5.500px; height: 5.500px; border: solid #333; border-width: 0 2px 2px 0; transform: rotate(45deg); margin: 0 1px 3px 5px; }
.paste { width: 48px; margin-left: 11px; color: #a19f9d; }
.clip-list { display: flex; flex-direction: column; padding-left: 6px; }
.clip-item { display: flex; align-items: center; gap: 4px; height: 30px; color: #b3b0ad; white-space: nowrap; letter-spacing: -.1px; }
.clip-item svg { width: 22px; height: 22px; }
.glabel { text-align: center; font-size: 12px; line-height: 16px; height: 14px; letter-spacing: -.2px; padding-right: 7px; }
.clipboard .glabel { padding-right: 0; }
.collapse { margin: 96px 0 0 auto; }

.main { display: grid; grid-template-columns: 51px 1421px 226px 222px; }
.rail { border-right: 1px solid #dcdad8; border-top: 1px solid #dcdad8; }
.rail-item { height: 50px; border-left: 4px solid transparent; display: flex; align-items: center; padding: 0 0 5px 10px; }
.rail-item.on { border-color: #f2c811; }
.rail-item svg { width: 24px; height: 24px; }

.report { display: grid; grid-template-rows: 45px 710px 43px; }
.recovery { display: flex; align-items: center; padding: 0 0 2px 15px; border-top: 1px solid #d2d0ce; box-shadow: inset 0 4px 4px -2px #ddd; font-size: 14.500px; color: #444; }
.recovery > svg:first-child { margin-top: -3px; }
.rec-text { margin-left: 11px; flex: 1; letter-spacing: -.19px; }
.rec-btn { width: 178px; height: 32px; line-height: 30px; border: 1px solid #bebbb8; background: #fff; text-align: center; color: #333; letter-spacing: 0; }
.rec-x { margin: 1px 14px 0 15px; }

.work { display: grid; grid-template-columns: 1171px 250px; background: #fff; }
.canvas { height: 616px; margin-left: 1px; padding-left: 8px; border-right: 1px dashed #333; border-bottom: 2px dotted #444; overflow: hidden; }
.card { border: 1px solid #555; border-radius: 16px; overflow: hidden; width: 1161px; }
.heading { height: 61px; border-top: 0; border-radius: 0 0 14px 14px; }
.heading svg { width: 1160px; height: 60px; }
.combo { height: 289px; border-radius: 22px; }
.combo svg { width: 1160px; height: 287px; }
.lower { display: flex; margin-top: 9px; }
.card.donut { width: 514px; height: 241px; }
.donut svg { width: 512px; height: 239px; }
.vt { font: 15.500px Roboto, sans-serif; fill: #252423; }
.lg { font-size: 12.500px; fill: #605e5c; }
.lg.b { font-weight: 600; }
.ax { font-size: 11px; fill: #605e5c; }
.at { font-size: 13px; fill: #252423; font-family: Roboto, sans-serif; }
.end { text-anchor: end; }
.mid { text-anchor: middle; }
.slicer { margin-left: 474px; padding-top: 2px; width: 162px; font-size: 12px; color: #605e5c; }
.sl-head { display: flex; justify-content: space-between; align-items: center; font-size: 12.500px; font-weight: 500; color: #252423; line-height: 18px; height: 21px; }
.sl-row { display: flex; align-items: center; height: 17.300px; line-height: 17px; gap: 7px; letter-spacing: -.15px; }
.sl-row i { width: 12px; height: 12px; border: 2px solid #c4c2c0; background: #fff; }
.sl-row i.sel { background: #252423; border-color: #252423; }

.filters { border-left: 1px solid #c0bebc; font-size: 14.500px; letter-spacing: -.25px; }
.searchwrap { border-bottom: 1px solid #b3b0ad; padding: 20px 0 6px 10px; }
.search { display: flex; align-items: center; gap: 11px; width: 225px; height: 38px; background: #fff; border: 1px solid #b3b0ad; border-radius: 2px; padding-left: 11px; font-size: 14.500px; }
.search svg { margin-top: -1px; }
.f-head { display: flex; justify-content: space-between; line-height: 20px; height: 20px; margin: 20px 20px 0 10px; }
.f-head b { font-weight: 400; letter-spacing: 1.200px; }
.f-box { width: 224px; height: 57px; margin: 12px 0 0 10px; border: 1px solid #c0bebc; border-radius: 3px; text-align: center; line-height: 55px; }
.f-head.second { margin-top: 33px; }

.pages { display: flex; background: #eaeaea; line-height: 42px; }
.pages > svg { margin-right: -1px; }
.pg { width: 97px; text-align: center; font-size: 14.500px; letter-spacing: -.25px; }
.pg.on { width: 96px; background: #fff; border: solid #b3b0ad; border-width: 0 1px; box-shadow: inset 0 -3px #f2c811; padding-left: 2px; }
.add { width: 49px; background: #f2c811; display: flex; align-items: center; justify-content: center; }
.add svg { margin-top: -1px; }

.vis, .fields { border-left: 1px solid #dcdad8; font-size: 14.500px; letter-spacing: -.2px; }
.p-head { display: flex; justify-content: space-between; align-items: center; height: 62px; font-size: 18px; font-weight: 500; color: #333; padding: 0 14px 0 15px; letter-spacing: .35px; }
.p-head svg { margin-top: -1px; }
.fields .p-head { padding-right: 10px; letter-spacing: .2px; }
.icons { display: grid; grid-template-columns: repeat(6, 35px); grid-auto-rows: 30px; margin-left: 12px; height: 180px; align-items: center; }
.icons svg { width: 21px; height: 21px; overflow: visible; }
.modes { display: flex; border-top: 1px solid #d2d0ce; padding: 9px 0 0 15px; height: 47px; }
.mode { width: 50px; height: 37px; padding-left: 12px; border-bottom: 5px solid #f2c811; border-radius: 2px; }
.roller { margin-left: 12px; }
.v-label { margin: 4px 0 0 15px; line-height: 24px; height: 24px; }
.v-box { width: 212px; height: 35px; margin: 5px 0 0 5px; border: 1px dashed #c0bebc; border-radius: 3px; background: #fff; line-height: 33px; padding-left: 12px; letter-spacing: -.15px; }
.d-head { margin: 15px 0 0 17px; font-size: 18px; line-height: 28px; font-weight: 500; color: #333; letter-spacing: .45px; }
.d-label { margin: 17px 0 0 11px; line-height: 20px; }
.toggle { display: flex; align-items: center; gap: 5px; margin: 17px 0 0 22px; height: 20px; line-height: 20px; }
.toggle + .d-label { margin-top: 23px; }
.v-box.drill { margin-top: 17px; height: 33px; line-height: 31px; padding-left: 10px; }

.fields .searchwrap { padding: 3px 0 4px 5px; border-color: #d2d0ce; }
.fields .search { width: 215px; height: 38px; padding-left: 12px; }
.rows { padding-top: 10px; }
.row { display: flex; align-items: center; height: 34px; padding-left: 5px; }
.ti { width: 17px; height: 17px; margin: 2px 14px 0 9px; }

.status { padding-left: 6px; line-height: 27px; font-size: 13.500px; letter-spacing: 0; }

.taskbar { display: flex; background: linear-gradient(90deg, #14222a 0, #0f2530 500px, #161d21 750px, #16181a 1100px, #161819 1450px, #0a171e 1700px, #0a1820); color: #fff; }
.tb-search { display: flex; align-items: center; width: 430px; background: #f2f2f2; border-top: 1px solid #bbb; color: #222; font-size: 16.500px; }
.tb-search span { flex: 1; letter-spacing: .05px; }
.tb-search > svg:last-child { margin-right: 18px; }
.pbi { width: 61px; background: #4a5053; border-bottom: 3px solid #76b9ed; padding: 10px 0 0 15px; margin-right: 632px; }
.eng { width: 40px; padding-left: 6px; line-height: 51px; letter-spacing: -.3px; }
.clock { width: 95px; text-align: center; line-height: 23px; padding-top: 2px; letter-spacing: .1px; }
.note { margin-left: auto; }
```
